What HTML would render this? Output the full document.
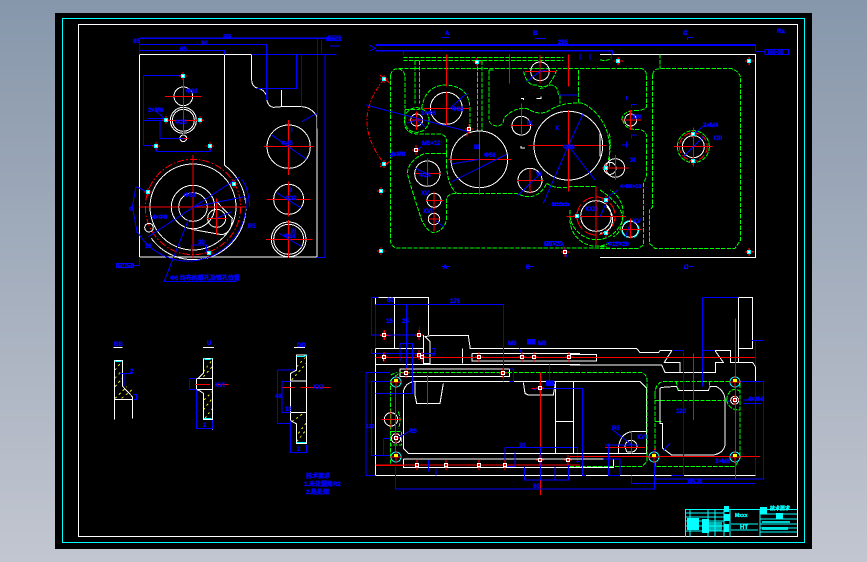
<!DOCTYPE html>
<html><head><meta charset="utf-8"><style>
html,body{margin:0;padding:0;width:867px;height:562px;overflow:hidden;background:linear-gradient(#8797ab,#c2c6d0)}
svg{display:block;position:absolute;left:0;top:0}
text{font-family:"Liberation Sans","Noto Sans CJK SC",sans-serif;fill:#0000ff;stroke:#0000ff;stroke-width:.35;font-size:6px;font-weight:bold}
.g{fill:none;stroke-width:3}
.w{stroke:#fff}.b{stroke:#0000ff}.r{stroke:#f00}.n{stroke:#0f0;stroke-dasharray:13 4}.c{stroke:#0ff}.y{stroke:#dd0}
</style></head><body>
<svg width="867" height="562" viewBox="0 0 867 562" shape-rendering="crispEdges">
<defs>
<g id="m"><path d="M-4 0H4M0-4V4" stroke="#f00" fill="none"/><rect x="-2" y="-2" width="4" height="4" fill="#0ff"/><rect x="-1" y="-1" width="2" height="2" fill="#fff"/></g>
<g id="s"><path d="M-4 0H4M0-5V5" stroke="#f00" fill="none"/><rect x="-1.5" y="-1.5" width="3" height="3" fill="#f00" stroke="#fff"/></g>
<g id="o"><circle r="5" fill="#000" stroke="#0ff"/><path d="M-6 0H6M0-6V6" stroke="#f00"/><rect x="-2" y="-3" width="4" height="3" fill="#ff0"/></g>
</defs>
<rect x="55" y="13" width="757" height="536" fill="#000"/>
<rect x="62.5" y="18.5" width="742" height="524" fill="none" stroke="#0ff"/>
<rect x="78.5" y="24.5" width="719" height="512" fill="none" stroke="#fff"/>

<!-- LEFT VIEW -->
<g transform="scale(.33333)" class="g">
<path class="w" d="M418 163H755V240Q756 262 775 265Q790 268 799 285Q799 318 820 322L845 320H905Q935 322 951 350V771H418ZM845 270V320M673 163V497"/>
<path class="w" d="M674 496A157 157 0 1 1 454 715"/>
<circle class="w" cx="579" cy="621" r="129"/>
<circle class="r" cx="579" cy="621" r="143" style="stroke-dasharray:22 6 5 6"/>
<circle class="w" cx="579" cy="621" r="65"/><circle class="w" cx="579" cy="621" r="43"/>
<circle class="w" cx="650" cy="655" r="27"/><path class="w" d="M575 688L665 704Q695 700 697 655L650 605"/>
<circle class="w" cx="447" cy="683" r="13"/>
<circle class="w" cx="550" cy="289" r="28"/><circle class="w" cx="550" cy="361" r="39"/><circle class="w" cx="550" cy="361" r="33"/><circle class="w" cx="550" cy="415" r="10"/>
<circle class="w" cx="866" cy="440" r="65"/><circle class="w" cx="866" cy="598" r="45"/><circle class="w" cx="866" cy="718" r="52"/><circle class="w" cx="866" cy="718" r="45"/>
<path class="r" d="M495 289H604M550 235V345M490 361H610M550 320V405M535 415H565M792 440H942M866 360V525M800 598H932M866 545V650M798 718H938M866 660V772M418 621H740M579 465V775M620 655H680M650 595V705"/>
<path class="b" d="M418 133H800V300M418 151H673V163M418 115V163M755 163H1010M890 163V265H770M905 163V320M952 115V385M975 163V772H950M430 227H550M430 227V436H470M430 361H497M480 361V415H550M470 455H632M470 436V455M632 436V455M350 790H400V802H350ZM400 796H418V771M492 845L565 660M492 845H710M445 710L720 530M579 621L735 590M650 655L695 635M815 405L920 478M830 578L905 625M838 700L905 740M905 365L950 340M443 355H500M465 330L497 360M408 560L397 620L412 700M575 752V735H620V760M985 108H1020V122H985ZM965 120V160M990 138H1020"/>
<path class="b" style="stroke-width:4" d="M418 115H1010"/>
<path class="b" d="M737 590A174 174 0 0 1 410 690M410 560L440 575M725 538Q745 560 749 621"/>
</g>
<!-- RIGHT VIEW -->
<g transform="translate(350 20) scale(.33333)" class="g">
<path class="n" d="M160 113H640M160 122H640M122 165Q125 146 145 146H780M122 165V665Q125 684 145 684H780M145 146Q165 150 165 175V265M165 268Q215 270 215 265Q225 195 290 195Q360 200 360 270V335M165 270L165 320Q175 342 205 342H270Q290 345 290 365V400M290 400H225Q175 420 172 460Q185 510 215 600Q235 640 255 638Q290 625 290 590V535Q295 520 320 520H500Q560 550 590 490M290 400Q285 490 320 520M195 122V250M208 122V250M383 122V335M396 122V335M417 150V300Q420 318 445 318Q460 315 462 295Q490 262 530 265Q570 290 600 270Q640 245 700 250Q770 290 778 370V440M417 150H430M685 150V250M630 225V250M625 225Q625 195 600 195Q570 205 560 195Q530 200 520 150M620 150Q600 205 570 205M660 570A80 80 0 1 0 780 510M660 600A80 80 0 0 0 780 668M590 490Q620 510 660 500H740"/>
<circle class="n" cx="200" cy="300" r="37"/>
<path class="r" style="stroke-dasharray:14 5 4 5" d="M102 178Q0 300 102 430"/>
<g class="w">
<circle cx="289" cy="265" r="48"/><circle cx="388" cy="418" r="85"/><circle cx="655" cy="377" r="103"/><circle cx="514" cy="317" r="28"/><circle cx="570" cy="154" r="28"/><circle cx="232" cy="461" r="38"/><circle cx="540" cy="481" r="36"/><circle cx="252" cy="541" r="21"/><circle cx="252" cy="597" r="17"/><circle cx="200" cy="300" r="18"/><circle cx="738" cy="588" r="46"/><circle cx="780" cy="445" r="18"/>
<path d="M513 235H521V240M560 235H573V230M513 378V384H525"/>
</g>
<circle class="r" cx="738" cy="588" r="57" style="stroke-dasharray:35 10"/>
<path class="r" d="M289 103V200M289 215V315M220 265H360M388 335V525M295 418H485M655 103V200M655 270V515M535 377H770M514 250V345M482 317H548M570 105V190M525 154H620M478 103V190M195 461H272M232 415V500M503 481H582M540 445V520M228 541H280M252 515V570M235 597H270M252 575V635M175 300H225M200 275V330M650 590H780M738 500V675M90 165L120 190M90 440L120 425M350 350L355 335"/>
<path class="b" d="M58 75L76 85L60 92M160 92V105M48 255L355 335M305 485L470 403M305 432L388 418M580 550L655 377L735 480M655 377L700 280M505 525L572 460M195 445L232 461M170 310L200 300L225 320M530 185L570 154L590 150M300 265L350 220M120 410L160 400M190 395L215 380M605 550H655V556H605M275 52H300M555 55H587M275 740H300M528 740H552M585 665H635L650 710M255 600L280 620M625 225H685M690 100V120M720 100V120"/>
<path class="b" style="stroke-width:5" d="M76 75H780"/><path class="b" style="stroke-width:4" d="M76 92H780"/>
</g>
<g transform="translate(600 20) scale(.33333)" class="g">
<path class="w" d="M0 103H467V712H0"/>
<path class="n" d="M0 146H125Q140 150 140 170V260Q135 270 110 272M65 300Q70 270 110 272M68 300Q75 325 100 328H120Q140 335 140 350V470L130 490V675L115 685H0M158 165Q160 146 180 146H395Q420 155 422 175V660L405 685H165L148 670V570L158 560V165M180 103V146M0 120Q30 125 35 110M0 510Q60 550 68 590Q65 640 40 650M0 680H20M28 340Q35 380 25 420"/>
<circle class="n" cx="280" cy="380" r="48"/>
<circle class="r" cx="280" cy="380" r="42" style="stroke-dasharray:20 8"/>
<circle class="w" cx="280" cy="380" r="33"/>
<circle class="w" cx="46" cy="444" r="28"/><circle class="w" cx="92" cy="300" r="18"/><circle class="w" cx="91" cy="628" r="24"/><circle class="c" cx="91" cy="628" r="26" style="stroke-dasharray:30 20"/>
<path class="w" d="M0 340V410M20 560Q50 590 30 625Q15 640 0 640"/>
<path class="r" d="M222 380H338M280 322V440M10 444H85M46 405V480M65 300H125M92 270V330M62 628H125M91 595V655M0 590H78M438 123H462M449 112V135M40 123H70M55 113V133M438 695H462M449 685V705"/>
<path class="b" d="M467 75V95M467 95H495M495 88H565V103H495ZM38 92V103M35 103V118M285 340L310 318H335M250 410L310 350M0 590L30 525L55 510M75 655L91 610M20 668H75M250 42H258V30M262 60V52H280M265 740H280M252 745H262V732M80 240V228M95 262V254H110M95 355V345H110M65 375H85M80 365V382"/>
<path class="b" style="stroke-width:5" d="M0 75H467"/><path class="b" style="stroke-width:4" d="M0 92H38"/>
</g>
<!-- SECTION VIEW -->
<g transform="translate(360 285) scale(.33333)" class="g">
<path class="w" d="M46 190V572H660M46 37H206V150M46 37V190M103 37V190M46 190H180M46 238H660M46 190H190M190 150V235H210V170L195 155L210 152H305L325 152L330 185V190H660M210 235H190M308 190V235M336 205H660M336 205V228H660M70 208V228M46 205H200M120 252H448V275H120ZM160 290H660M160 290Q135 295 130 320V490L145 505H660M165 290V330L170 355H240L250 295M490 292L495 325L505 330H580L587 290M587 290V505M640 290V505M588 410H640M130 522H660M130 522V548H660M46 572H660"/>
<path class="n" d="M120 262H660M92 285V540H660M92 270L110 262M92 285L120 262M115 380Q125 410 115 430M92 440H125V480H92"/>
<circle class="w" cx="93" cy="403" r="20"/><circle class="w" cx="108" cy="460" r="14"/>
<path class="r" d="M46 217H660M46 540H660M60 151H92M177 140V160M73 135V165M541 262V630M202 270V360M107 280V530M65 403H123M93 375V430M48 541H130M515 310H565"/>
<path class="b" d="M34 37H56M34 37V150H178V125M46 58H430V290M139 58V250M46 58V190M120 175H158V325H46M120 175V230M34 190V205H225V190H215M215 210H225M18 262H90M18 262V572H46M35 290H92M35 290V512H90M70 460H92M70 460V512M160 432L108 462M107 530V612H660M448 252H460V290H448M478 190L490 215M435 488H652V530M435 488V545H465V500M493 545V585H625V540M541 488V585M585 545V585M650 530H660M568 238V290M520 315L541 305M541 310H660M205 525V560M228 550V572"/>
<rect x="503" y="163" width="22" height="14" stroke="#00f" fill="#00f"/>
<rect x="560" y="288" width="22" height="14" stroke="#00f" fill="#00f"/>
</g>
<g transform="translate(570 285) scale(.33333)" class="g">
<path class="w" d="M0 190H200L210 203H265L270 197H305L283 232H330V262H285L275 240H0M0 228H80V208H0M330 262H437V232H460L435 197H482V232H505V190H548V37H505V190M505 232H548L556 245V572H0M505 37V190M482 197V232H505M270 310Q275 305 320 305L325 317H415L420 305H440Q465 320 465 345V480Q460 505 430 510H305L278 490V415H270V330ZM0 290H210L230 310V505L0 505M10 290V505M0 410H10M0 522H130V548H0M145 490Q150 445 185 440H228M145 490V505M165 485A18 18 0 1 1 200 490Q195 505 170 500Z"/>
<path class="n" d="M0 262H215Q230 268 231 285V530L215 545H0M255 330Q255 290 285 289H510V520L495 545H255V330M255 346H470M255 410H275M470 345A25 35 0 0 1 510 320M470 345Q475 375 510 375M318 289L325 315M418 289V310"/>
<circle class="w" cx="494" cy="346" r="12"/>
<path class="r" d="M0 217H555M370 205V405M496 100V580M0 515H250M270 514H570M105 488H225M185 440V505M253 490V540"/>
<path class="b" d="M397 37H505M397 37V305M397 196H435M545 166H580M556 166V240M310 196H340V572H305M0 310H38V572H48M115 475V572H150M105 480H205M100 522H125M115 522H150V570M253 495V612H0M185 572V595H556M253 582H580V290H480M556 572V290M125 432L185 480M300 475L280 497M520 345H575M520 356H575M478 350L470 345"/>
</g>
<!-- SECTION DETAILS -->
<g transform="translate(100 330) scale(.33333)" class="g">
<path class="y" style="stroke-dasharray:7 9" d="M45 120L65 95M45 145L67 120M45 170L67 145M45 205L80 170M65 205L95 180M310 125L337 90M310 140L337 110M315 265L337 235M310 240L337 205M312 210L337 185M590 110L618 80M575 150L618 100M590 335L618 300M595 310L618 280M575 275L610 250"/>
<path class="w" d="M43 92H67V168L97 200V208H43ZM43 208V268M97 208V265M310 85H337V268H310V190L295 180H289V145H295L310 130ZM289 145H337M289 179H337M337 268V298M590 75H620V340H590V282L572 272V130L590 120ZM572 153H620M572 247H620"/>
<path class="c" d="M43 92L50 95H60L67 92M310 85L316 88H330L337 85M312 265H335M590 80H610L620 75M590 338H618"/>
<path class="w" d="M40 52H68M309 52H342M582 52H615"/>
<path class="r" d="M285 163H330M346 163H385M548 172H585M602 172H692"/>
<path class="b" d="M60 130H97M72 130V168M100 194H110V208H100M268 145H289M268 179H289M268 145V179M289 179V295H337V270M532 120H585M532 120V280H572M546 155H572M546 155V247H572M572 272V368H620V345"/>
</g>
<!-- Markers -->
<use href="#m" x="183" y="76"/><use href="#m" x="166" y="120"/><use href="#m" x="200" y="120"/><use href="#m" x="156" y="146"/><use href="#m" x="210" y="146"/><use href="#m" x="234" y="184"/><use href="#m" x="148" y="192"/><use href="#m" x="209" y="253"/>
<use href="#m" x="384" y="79"/><use href="#m" x="384" y="164"/><use href="#m" x="477" y="62"/><use href="#s" x="469" y="129"/><use href="#m" x="381" y="191"/><use href="#m" x="381" y="251"/><use href="#s" x="416" y="150"/><use href="#s" x="565" y="252"/><use href="#m" x="606" y="200"/><use href="#m" x="606" y="233"/><use href="#m" x="606" y="168"/><use href="#m" x="577" y="216"/><use href="#m" x="618" y="61"/><use href="#m" x="749" y="61"/><use href="#m" x="749" y="252"/><use href="#m" x="693" y="134"/><use href="#m" x="693" y="161"/>
<use href="#o" x="396" y="382"/><use href="#o" x="396" y="457"/><use href="#o" x="654" y="457"/><use href="#o" x="735" y="382"/><use href="#o" x="735" y="457"/><use href="#s" x="540" y="388"/><use href="#s" x="384" y="335"/><use href="#s" x="419" y="335"/><use href="#s" x="384" y="357"/><use href="#s" x="419" y="355"/><use href="#s" x="422" y="357"/><use href="#s" x="479" y="357"/><use href="#s" x="522" y="357"/><use href="#s" x="534" y="357"/><use href="#s" x="569" y="357"/><use href="#s" x="406" y="373"/><use href="#s" x="503" y="373"/><use href="#s" x="417" y="465"/><use href="#s" x="446" y="465"/><use href="#s" x="479" y="465"/><use href="#s" x="505" y="465"/><use href="#s" x="540" y="460"/><use href="#s" x="568" y="460"/><use href="#s" x="735" y="400"/><use href="#s" x="396" y="438"/>
<!-- Title block -->
<g stroke="#0ff" fill="none" stroke-width="1">
<path d="M685.5 537V509.5H797M690 509V537M708 509V537M715 509V537M724 509V537M730 509V537M760 509V537M685 513H724M685 517H724M685 521H724M685 526H724M685 531H724M731 524H758M731 530H758M760 514H797M760 519H797M760 524H797M760 528H797M760 532H797"/>
</g>
<g fill="#0ff">
<rect x="687" y="518" width="12" height="12"/><rect x="702" y="519" width="7" height="14"/><rect x="708" y="522" width="14" height="9" opacity=".7"/><rect x="724" y="506" width="5" height="6"/><rect x="724" y="514" width="6" height="7"/><rect x="724" y="524" width="5" height="8"/><rect x="760" y="507" width="7" height="7"/><rect x="776" y="513" width="7" height="6"/><rect x="762" y="521" width="28" height="2" opacity=".8"/><rect x="762" y="527" width="26" height="3" opacity=".8"/>
</g>
<g>
<text x="735" y="517" style="fill:#0ff;stroke:#0ff;font-size:5px">Mxxx</text><text x="740" y="529" style="fill:#0ff;stroke:#0ff">HT</text><text x="770" y="510" style="fill:#0ff;stroke:#0ff;font-size:5px">技术要求</text>
<text x="223" y="38" style="font-size:5px">205</text><text x="201" y="45">90</text><text x="180" y="51">65</text><text x="133" y="43">85</text><text x="326" y="41" style="font-size:5px">M8×25</text>
<text x="148" y="112">2×M6</text><text x="175" y="124">Φ25</text><text x="186" y="93">Φ20</text>
<text x="281" y="145">Φ45</text><text x="285" y="200">Φ32</text><text x="284" y="238">Φ38</text><text x="291" y="132">I</text><text x="289" y="192">II</text><text x="291" y="233">III</text>
<text x="152" y="219">4×Φ9</text><text x="184" y="197">Φ38</text><text x="170" y="280">Φ6 均布的螺孔及销孔位置</text><text x="118" y="268" style="font-size:5px">M10×6</text>
<text x="129" y="211">Φ</text><text x="248" y="228">R5</text><text x="145" y="248">15</text><text x="198" y="244">30</text>
<text x="558" y="44">285</text><text x="445" y="35">A</text><text x="533" y="35">B</text><text x="683" y="35">C</text><text x="443" y="269">A</text><text x="526" y="269">B</text><text x="684" y="269">C</text>
<text x="421" y="115">3×Φ6</text><text x="452" y="111">Φ28</text><text x="474" y="149">III</text><text x="484" y="157">Φ58</text><text x="555" y="130">X</text><text x="563" y="149">Φ68</text><text x="390" y="156">4×M8</text><text x="422" y="145">M6×12</text><text x="419" y="177">Φ24</text><text x="421" y="195">XV</text><text x="423" y="213">XVI</text><text x="552" y="206" style="font-size:5px">M10×1</text><text x="544" y="246">M8×20</text><text x="620" y="188" style="font-size:5px">4×M6×10</text><text x="703" y="127">2×M4</text><text x="713" y="140">XIII</text><text x="585" y="211">XXIII</text><text x="633" y="223">XV</text><text x="607" y="246">Φ15×20</text><text x="632" y="119">XIV</text><text x="630" y="162">XI</text><text x="527" y="125">IX</text><text x="536" y="176">VI</text><text x="777" y="33">Ra</text><text x="768" y="54" style="font-size:5px">M8×30</text>
<text x="450" y="303">175</text><text x="387" y="302">60</text><text x="538" y="345">M8</text><text x="508" y="345">M8</text><text x="386" y="323">15</text><text x="402" y="323">25</text><text x="409" y="433">R5</text><text x="366" y="428" style="font-size:5px">120</text><text x="519" y="447">30</text><text x="687" y="483" style="font-size:5px">195.25</text><text x="612" y="430">R5</text><text x="637" y="439">XVI</text><text x="715" y="463">3×M8</text><text x="748" y="401">4×M4</text><text x="676" y="413">120</text><text x="533" y="488">60</text>
<text x="114" y="346">BB</text><text x="207" y="345">U</text><text x="297" y="347">DD</text><text x="130" y="373">2</text><text x="215" y="387">XVI</text><text x="313" y="389">XXII</text><text x="203" y="427">2</text><text x="297" y="451">2</text><text x="275" y="398">48</text><text x="285" y="411">15</text><text x="306" y="478">技术要求</text><text x="304" y="486">1.未注圆角R2</text><text x="306" y="494">2.热处理</text>
</g>
</svg>
</body></html>
